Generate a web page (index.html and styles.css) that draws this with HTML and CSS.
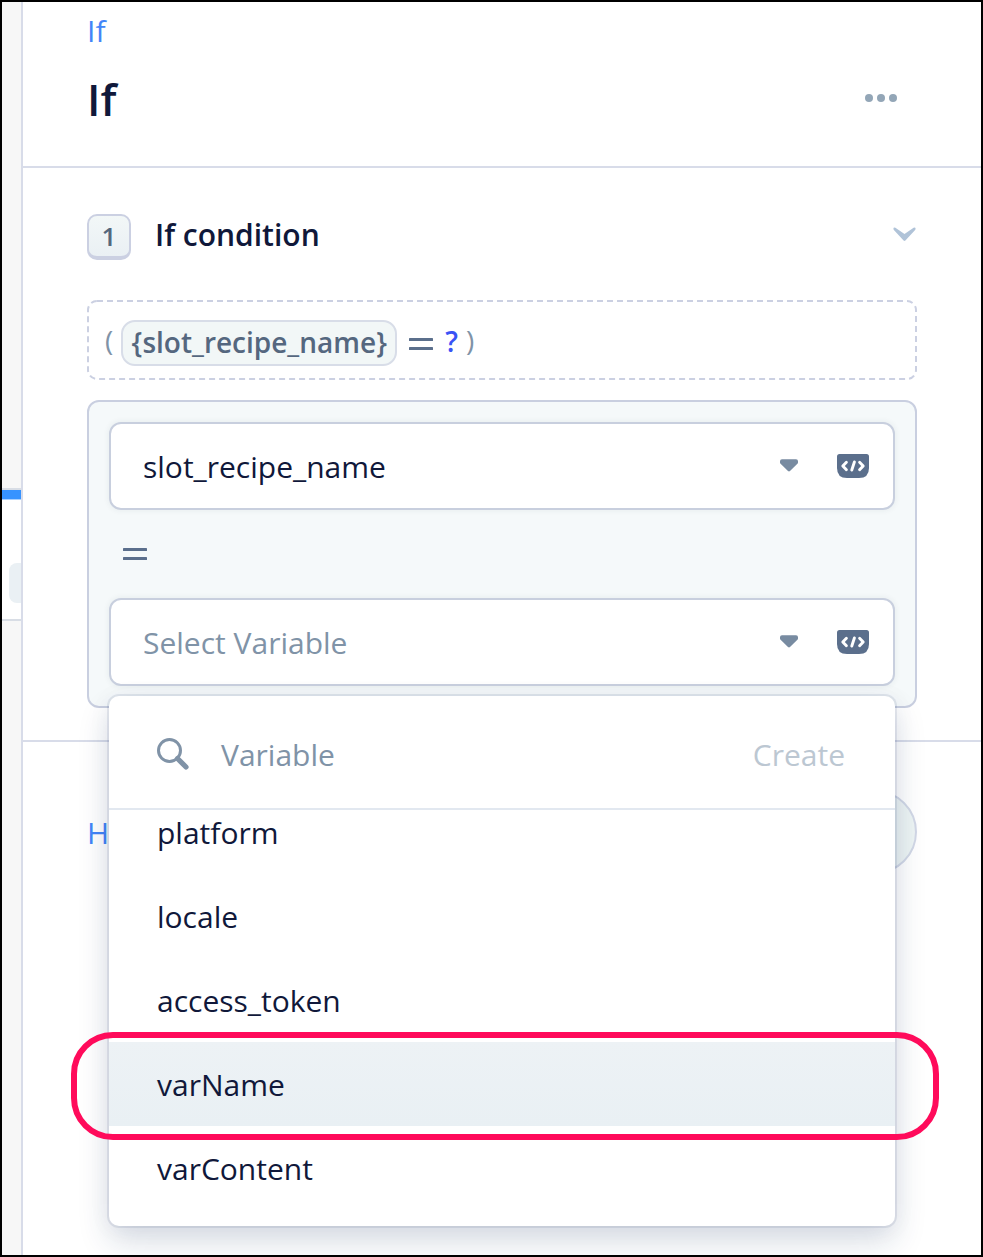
FILE: index.html
```html
<!DOCTYPE html>
<html lang="en">
<head>
<meta charset="utf-8">
<title>If</title>
<link rel="stylesheet" href="styles.css">
</head>
<body>
<svg width="0" height="0" class="defs" aria-hidden="true">
  <symbol id="code" viewBox="0 0 32 24">
    <path fill="#5b6f8c" d="M2.5 0H29.5Q32 0 32 2.5V14Q32 24 22 24H10Q0 24 0 14V2.5Q0 0 2.5 0Z"/>
    <path fill="none" stroke="#fff" stroke-width="2.9" stroke-linecap="round" stroke-linejoin="round" d="M9.4 8.2L5.8 12L9.4 15.8M22.6 8.2L26.2 12L22.6 15.8M17.4 8L14.8 16"/>
  </symbol>
  <symbol id="caret" viewBox="0 0 18 13">
    <path fill="#788ba1" d="M2 .2H16Q18 .2 18 2.2V3.4Q18 4.1 17.4 4.7L10 12.1Q9 13 8 12.1L.6 4.7Q0 4.1 0 3.4V2.2Q0 .2 2 .2Z"/>
  </symbol>
  <symbol id="equals" viewBox="0 0 24 12">
    <rect width="24" height="3" rx=".6" fill="#5b6f8c"/><rect y="9" width="24" height="3" rx=".6" fill="#5b6f8c"/>
  </symbol>
</svg>
<div class="window">
  <div class="rail">
    <div class="rail-node"><div class="rail-chip"></div></div>
  </div>
  <main class="panel">
    <header class="header">
      <a class="crumb">If</a>
      <div class="title-row">
        <h1 class="title">If</h1>
        <svg class="more" width="32" height="8" viewBox="0 0 32 8" fill="#93a6b7"><circle cx="4" cy="4" r="4"/><circle cx="16" cy="4" r="4"/><circle cx="28" cy="4" r="4"/></svg>
      </div>
    </header>
    <section class="condition">
      <div class="condition-head">
        <span class="badge">1</span>
        <h2 class="condition-title">If condition</h2>
        <svg class="chevron" width="24" height="15" viewBox="0 0 24 15"><path fill="#b0c3d8" d="M2.4.7L11.5 7L20.6.7Q22.6.2 22.6 1.8Q22.6 2.6 21.9 3.3L12.4 13.6Q11.5 14.4 10.6 13.6L1.1 3.3Q.4 2.6.4 1.8Q.4.2 2.4.7Z"/></svg>
      </div>
      <div class="formula">
        <svg class="dash" width="830" height="80"><rect x="1" y="1" width="828" height="78" rx="9" fill="none" stroke="#cbd0e2" stroke-width="2" stroke-dasharray="6 4"/></svg>
        <span class="paren">(</span>
        <span class="pill">{slot_recipe_name}</span>
        <svg class="formula-eq" width="24" height="12"><use href="#equals"/></svg>
        <span class="unknown">?</span>
        <span class="paren">)</span>
      </div>
      <div class="group">
        <div class="select">
          <span class="select-text">slot_recipe_name</span>
          <svg class="caret" width="18" height="13"><use href="#caret"/></svg>
          <svg class="code" width="32" height="24"><use href="#code"/></svg>
        </div>
        <div class="operator"><svg width="24" height="12"><use href="#equals"/></svg></div>
        <div class="select">
          <span class="select-text placeholder">Select Variable</span>
          <svg class="caret" width="18" height="13"><use href="#caret"/></svg>
          <svg class="code" width="32" height="24"><use href="#code"/></svg>
          <div class="menu">
            <div class="search">
              <svg class="search-icon" width="32" height="32" viewBox="0 0 32 32" fill="none" stroke="#8093a7"><circle cx="12.5" cy="12.5" r="11" stroke-width="3"/><path d="M20.5 20.5L29 29" stroke-width="5.2" stroke-linecap="round"/></svg>
              <span class="search-text">Variable</span>
              <span class="create">Create</span>
            </div>
            <div class="options">
              <div class="option first">platform</div>
              <div class="option">locale</div>
              <div class="option">access_token</div>
              <div class="option active">varName</div>
              <div class="option">varContent</div>
            </div>
          </div>
        </div>
      </div>
    </section>
    <footer class="footer">
      <a class="help">H</a>
      <div class="button"></div>
    </footer>
  </main>
  <div class="highlight"></div>
</div>
</body>
</html>
```
FILE: styles.css
```css
* { box-sizing: border-box; }
body {
  margin: 0;
  background: #fff;
  color: #10183a;
  font-family: "Open Sans", "Noto Sans", sans-serif;
  font-size: 30px;
  line-height: 40px;
}
svg { display: block; flex: none; }
.defs { position: absolute; }
.window {
  position: relative;
  display: flex;
  width: 983px;
  height: 1257px;
  border: 2px solid #000;
  overflow: hidden;
}
.rail {
  flex: none;
  width: 21px;
  padding-top: 486px;
  background: #f7f7f7;
  border-right: 2px solid #d8dce9;
}
.rail-node {
  height: 133px;
  padding: 73px 0 0 7px;
  border-top: 2px solid #d8dde5;
  border-bottom: 2px solid #d8dde5;
  background: linear-gradient(#3793ff 9px, #a9d0ff 9px, #a9d0ff 10px, #fff 10px);
}
.rail-chip {
  height: 40px;
  border-radius: 8px 0 0 8px;
  background: #eaf0f4;
}
.panel { flex: 1; min-width: 0; }
.header {
  height: 166px;
  padding: 9px 64px 0;
  border-bottom: 2px solid #d8dce9;
}
.crumb, .help { color: #4285f8; }
.crumb { display: block; }
.title-row {
  display: flex;
  align-items: center;
  justify-content: space-between;
  height: 60px;
  margin-top: 18px;
}
.title { margin: 0; font-size: 44px; font-weight: 600; line-height: 60px; }
.more { margin: -2px 20px 0 0; }
.condition {
  height: 574px;
  padding: 46px 64px 0;
  border-bottom: 2px solid #d8dce9;
}
.condition-head { display: flex; height: 46px; margin-bottom: 40px; }
.badge {
  width: 44px;
  height: 46px;
  border: 2px solid #cbd0e2;
  border-bottom-width: 4px;
  border-radius: 10px;
  background: linear-gradient(#f2f7f7, #eaf0f4);
  color: #55677d;
  font-size: 26px;
  font-weight: 600;
  text-align: center;
}
.condition-title {
  flex: 1;
  margin: 1px 0 0 24px;
  font-size: 30px;
  font-weight: 600;
}
.chevron { margin-top: 13px; }
.formula {
  position: relative;
  display: flex;
  align-items: center;
  height: 80px;
  padding: 0 18px;
  margin-bottom: 20px;
  font-size: 28px;
  line-height: 42px;
}
.dash { position: absolute; left: 0; top: 0; }
.paren { color: #8093a7; }
.pill {
  width: 276px;
  height: 46px;
  margin: 6px 12px 0 8px;
  border: 2px solid #d8dde8;
  border-radius: 14px;
  background: #f2f7f7;
  color: #55677f;
  font-weight: 600;
  line-height: 40px;
  text-align: center;
}
.formula-eq { margin: 7px 12px 0 0; }
.unknown { margin: 2px 8px 0 0; color: #3a53f5; font-weight: 600; }
.group {
  height: 308px;
  padding: 20px;
  border: 2px solid #c9cfe0;
  border-radius: 12px;
  background: #f5f9fa;
}
.select {
  position: relative;
  display: flex;
  align-items: center;
  height: 88px;
  padding: 0 24px 0 32px;
  border: 2px solid #c8cfde;
  border-radius: 12px;
  background: #fff;
  box-shadow: 0 0 6px rgba(40, 60, 80, .08);
}
.select-text { flex: 1; margin-top: 2px; }
.placeholder { color: #8093a7; }
.caret { margin: -1px 39px 0 0; }
.operator {
  display: flex;
  align-items: center;
  height: 88px;
  padding-left: 14px;
}
.menu {
  position: absolute;
  z-index: 2;
  left: -2px;
  top: 96px;
  width: 786px;
  height: 530px;
  border-radius: 10px;
  background: #fff;
  box-shadow: 0 0 0 2px rgba(17, 49, 96, .09), 0 16px 32px rgba(17, 49, 96, .16), 0 2px 24px rgba(17, 49, 96, .05);
}
.search {
  display: flex;
  align-items: center;
  height: 114px;
  padding: 6px 50px 0 48px;
  border-bottom: 2px solid #e2e8f0;
}
.search-icon { margin: -2px 32px 0 0; }
.search-text { flex: 1; color: #8093a7; }
.create { color: #bcc7d2; }
.options { overflow: hidden; border-radius: 0 0 10px 10px; }
.option { height: 84px; padding: 1px 48px; line-height: 84px; }
.first { margin-top: -20px; }
.active { background: linear-gradient(#edf2f5, #e9f0f4); }
.footer {
  display: flex;
  align-items: center;
  justify-content: space-between;
  height: 180px;
  padding: 0 64px;
}
.help { margin-top: 2px; }
.button {
  width: 220px;
  height: 84px;
  border: 2px solid #d2d8e6;
  border-radius: 42px;
  background: #edf4f4;
}
.highlight {
  position: absolute;
  z-index: 3;
  left: 69px;
  top: 1030px;
  width: 868px;
  height: 108px;
  border: 6px solid #ff0b5b;
  border-radius: 42px;
}
```
